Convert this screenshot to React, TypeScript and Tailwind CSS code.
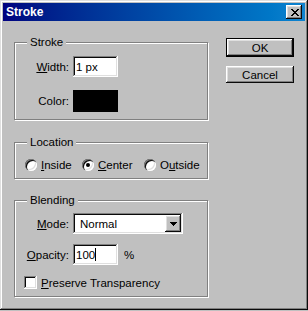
import type { ReactNode } from "react";

const raised =
  "shadow-[inset_-1px_-1px_#0a0a0a,inset_1px_1px_#ffffff,inset_-2px_-2px_#808080,inset_2px_2px_#dfdfdf]";
const sunken =
  "shadow-[inset_-1px_-1px_#ffffff,inset_1px_1px_#808080,inset_-2px_-2px_#dfdfdf,inset_2px_2px_#0a0a0a]";

const GroupBox = ({ title, className, children }: { title: string; className?: string; children: ReactNode }) => (
  <div className={`relative border border-[#808080] shadow-[inset_1px_1px_#ffffff,1px_1px_#ffffff] ${className}`}>
    <span className="absolute -top-[8px] left-[12px] px-[3px] bg-[#c0c0c0] leading-[14px]">{title}</span>
    {children}
  </div>
);

const Label = ({ children }: { children: ReactNode }) => (
  <div className="w-[54px] mr-[4px] text-right leading-[14px]">{children}</div>
);

const Radio = ({ checked, children, className }: { checked?: boolean; children: ReactNode; className?: string }) => (
  <div className={`flex items-center ${className}`}>
    <div className="w-[12px] h-[12px] rounded-full bg-white flex items-center justify-center shadow-[inset_1px_1px_#808080,inset_2px_2px_#0a0a0a,inset_-1px_-1px_#ffffff,inset_-2px_-2px_#dfdfdf]">
      {checked && <div className="w-[4px] h-[4px] rounded-full bg-black" />}
    </div>
    <span className="ml-[4px] leading-[14px]">{children}</span>
  </div>
);

const CloseGlyph = () => {
  const rows = [
    [0, 2, 6, 2],
    [1, 2, 5, 2],
    [2, 4],
    [3, 2],
    [2, 4],
    [1, 2, 5, 2],
    [0, 2, 6, 2],
  ];
  return (
    <svg width="8" height="7" viewBox="0 0 8 7" shapeRendering="crispEdges">
      {rows.map((r, y) => (
        <g key={y}>
          <rect x={r[0]} y={y} width={r[1]} height={1} fill="#000" />
          {r.length > 2 && <rect x={r[2]} y={y} width={r[3]} height={1} fill="#000" />}
        </g>
      ))}
    </svg>
  );
};

export default function App() {
  return (
    <div className="w-[308px] h-[311px] bg-[#c0c0c0]">
      <div
        className={`w-[308px] h-[310px] bg-[#c0c0c0] p-[3px] text-black text-[11.5px] font-['Liberation_Sans',Arial,sans-serif] shadow-[inset_-1px_-1px_#0a0a0a,inset_1px_1px_#dfdfdf,inset_-2px_-2px_#808080,inset_2px_2px_#ffffff]`}
      >
        {/* title bar */}
        <div className="h-[18px] flex items-center justify-between pl-[3px] pr-[3px] bg-gradient-to-r from-[#000080] to-[#1084d0]">
          <span className="text-white font-bold text-[12px] leading-[14px]">Stroke</span>
          <button className={`w-[16px] h-[14px] bg-[#c0c0c0] flex items-center justify-center pl-[1px] ${raised}`}>
            <CloseGlyph />
          </button>
        </div>

        <div className="flex items-start pl-[11px]">
          <div className="w-[194px] mt-[21px] flex flex-col">
            <GroupBox title="Stroke" className="pt-[13px] pb-[7px]">
              <div className="flex items-center h-[21px]">
                <Label>
                  <u>W</u>idth:
                </Label>
                <div className={`w-[45px] h-[21px] bg-white pl-[3px] flex items-center leading-[14px] ${sunken}`}>1 px</div>
              </div>
              <div className="flex items-center h-[22px] mt-[13px]">
                <Label>Color:</Label>
                <div className="w-[45px] h-[22px] bg-black" />
              </div>
            </GroupBox>

            <GroupBox title="Location" className="mt-[22px] pt-[15px] pb-[6px] pl-[10px]">
              <div className="flex items-center h-[14px]">
                <Radio className="w-[57px]">
                  <u>I</u>nside
                </Radio>
                <Radio checked className="w-[62px]">
                  <u>C</u>enter
                </Radio>
                <Radio>
                  O<u>u</u>tside
                </Radio>
              </div>
            </GroupBox>

            <GroupBox title="Blending" className="mt-[21px] pt-[12px] pb-[7px]">
              <div className="flex items-center h-[21px]">
                <Label>
                  <u>M</u>ode:
                </Label>
                <div className={`relative w-[110px] h-[21px] bg-white pl-[7px] flex items-center leading-[14px] ${sunken}`}>
                  Normal
                  <div className={`absolute right-[2px] top-[2px] w-[16px] h-[17px] bg-[#c0c0c0] flex items-center justify-center ${raised}`}>
                    <svg width="7" height="4" viewBox="0 0 7 4" shapeRendering="crispEdges">
                      <rect x="0" y="0" width="7" height="1" fill="#000" />
                      <rect x="1" y="1" width="5" height="1" fill="#000" />
                      <rect x="2" y="2" width="3" height="1" fill="#000" />
                      <rect x="3" y="3" width="1" height="1" fill="#000" />
                    </svg>
                  </div>
                </div>
              </div>
              <div className="flex items-center h-[21px] mt-[10px]">
                <Label>
                  <u>O</u>pacity:
                </Label>
                <div className={`w-[45px] h-[21px] bg-white pl-[3px] flex items-center leading-[14px] ${sunken}`}>
                  100
                  <span className="inline-block w-px h-[13px] bg-black" />
                </div>
                <span className="ml-[6px] leading-[14px]">%</span>
              </div>
              <div className="flex items-center h-[13px] mt-[11px] pl-[9px]">
                <div className={`w-[13px] h-[13px] bg-white ${sunken}`} />
                <span className="ml-[4px] leading-[14px]">
                  <u>P</u>reserve Transparency
                </span>
              </div>
            </GroupBox>
          </div>

          <div className="w-[68px] ml-[18px] mt-[17px] flex flex-col">
            <button className="h-[19px] border border-black bg-[#c0c0c0] shadow-[inset_-1px_-1px_#0a0a0a,inset_1px_1px_#ffffff,inset_-2px_-2px_#808080,inset_2px_2px_#dfdfdf] leading-[14px]">
              OK
            </button>
            <button className={`h-[17px] mt-[9px] bg-[#c0c0c0] leading-[14px] ${raised}`}>Cancel</button>
          </div>
        </div>
      </div>
    </div>
  );
}
